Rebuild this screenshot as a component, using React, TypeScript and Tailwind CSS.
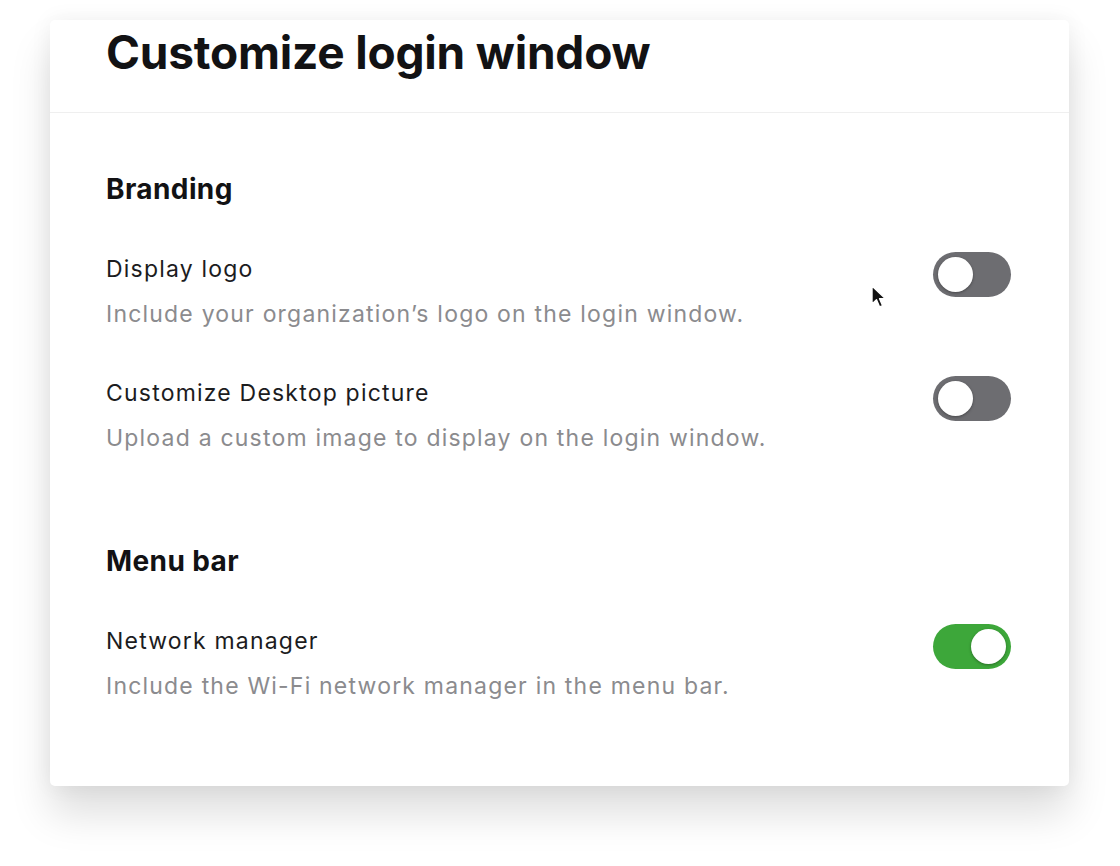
import type { ReactNode } from "react";

type ToggleProps = {
  on?: boolean;
};

function Toggle({ on = false }: ToggleProps) {
  return (
    <div
      className={
        on
          ? "flex h-[45px] w-[78px] shrink-0 items-center justify-end rounded-full bg-[#3da73a] px-[5px]"
          : "flex h-[45px] w-[78px] shrink-0 items-center justify-start rounded-full bg-[#6d6d71] px-[5px]"
      }
    >
      <div className="h-[35px] w-[35px] rounded-full bg-white shadow-[0_1px_3px_rgba(0,0,0,0.35)]" />
    </div>
  );
}

type SettingRowProps = {
  title: string;
  description: string;
  on?: boolean;
  children?: ReactNode;
};

function SettingRow({ title, description, on, children }: SettingRowProps) {
  return (
    <div className="relative flex items-start justify-between">
      <div>
        <p className="text-[23px] leading-[30px] tracking-[1.2px] text-[#1c1c1e]">{title}</p>
        <p className="mt-[15px] text-[23px] leading-[30px] tracking-[1.2px] text-[#8b8b8e]">
          {description}
        </p>
      </div>
      <div className="-mt-[2px]">
        <Toggle on={on} />
      </div>
      {children}
    </div>
  );
}

function Cursor() {
  return (
    <svg
      className="absolute left-[765px] top-[31px]"
      width="18"
      height="26"
      viewBox="0 0 18 26"
      aria-hidden="true"
    >
      <path
        d="M1 1 L1 19 L5.5 14.8 L8.6 22 L11.6 20.7 L8.6 13.7 L14.5 13.7 Z"
        fill="#111"
        stroke="#fff"
        strokeWidth="1.4"
        strokeLinejoin="round"
      />
    </svg>
  );
}

export default function App() {
  return (
    <div
      className="min-h-[866px] bg-white pl-[50px] pr-[51px] pt-[20px]"
      style={{ fontFamily: "Inter, 'Noto Sans', sans-serif" }}
    >
      <div className="h-[766px] w-[1019px] rounded-[5px] bg-white shadow-[0_28px_40px_rgba(0,0,0,0.13),0_0_22px_rgba(0,0,0,0.06)]">
        <div className="h-[93px] border-b border-[#efefef] pl-[56px] pt-[9px]">
          <h1 className="text-[46px] font-bold leading-[46px] tracking-[-0.2px] text-[#121214]">
            Customize login window
          </h1>
        </div>

        <div className="pl-[56px] pr-[58px] pt-[58px]">
          <h2 className="text-[28px] font-bold leading-[36px] tracking-[0.4px] text-[#121214]">
            Branding
          </h2>

          <div className="mt-[47px] flex flex-col gap-[49px]">
            <SettingRow
              title="Display logo"
              description="Include your organization’s logo on the login window."
            >
              <Cursor />
            </SettingRow>
            <SettingRow
              title="Customize Desktop picture"
              description="Upload a custom image to display on the login window."
            />
          </div>

          <h2 className="mt-[90px] text-[28px] font-bold leading-[36px] tracking-[0.4px] text-[#121214]">
            Menu bar
          </h2>

          <div className="mt-[47px]">
            <SettingRow
              title="Network manager"
              description="Include the Wi-Fi network manager in the menu bar."
              on
            />
          </div>
        </div>
      </div>
    </div>
  );
}
